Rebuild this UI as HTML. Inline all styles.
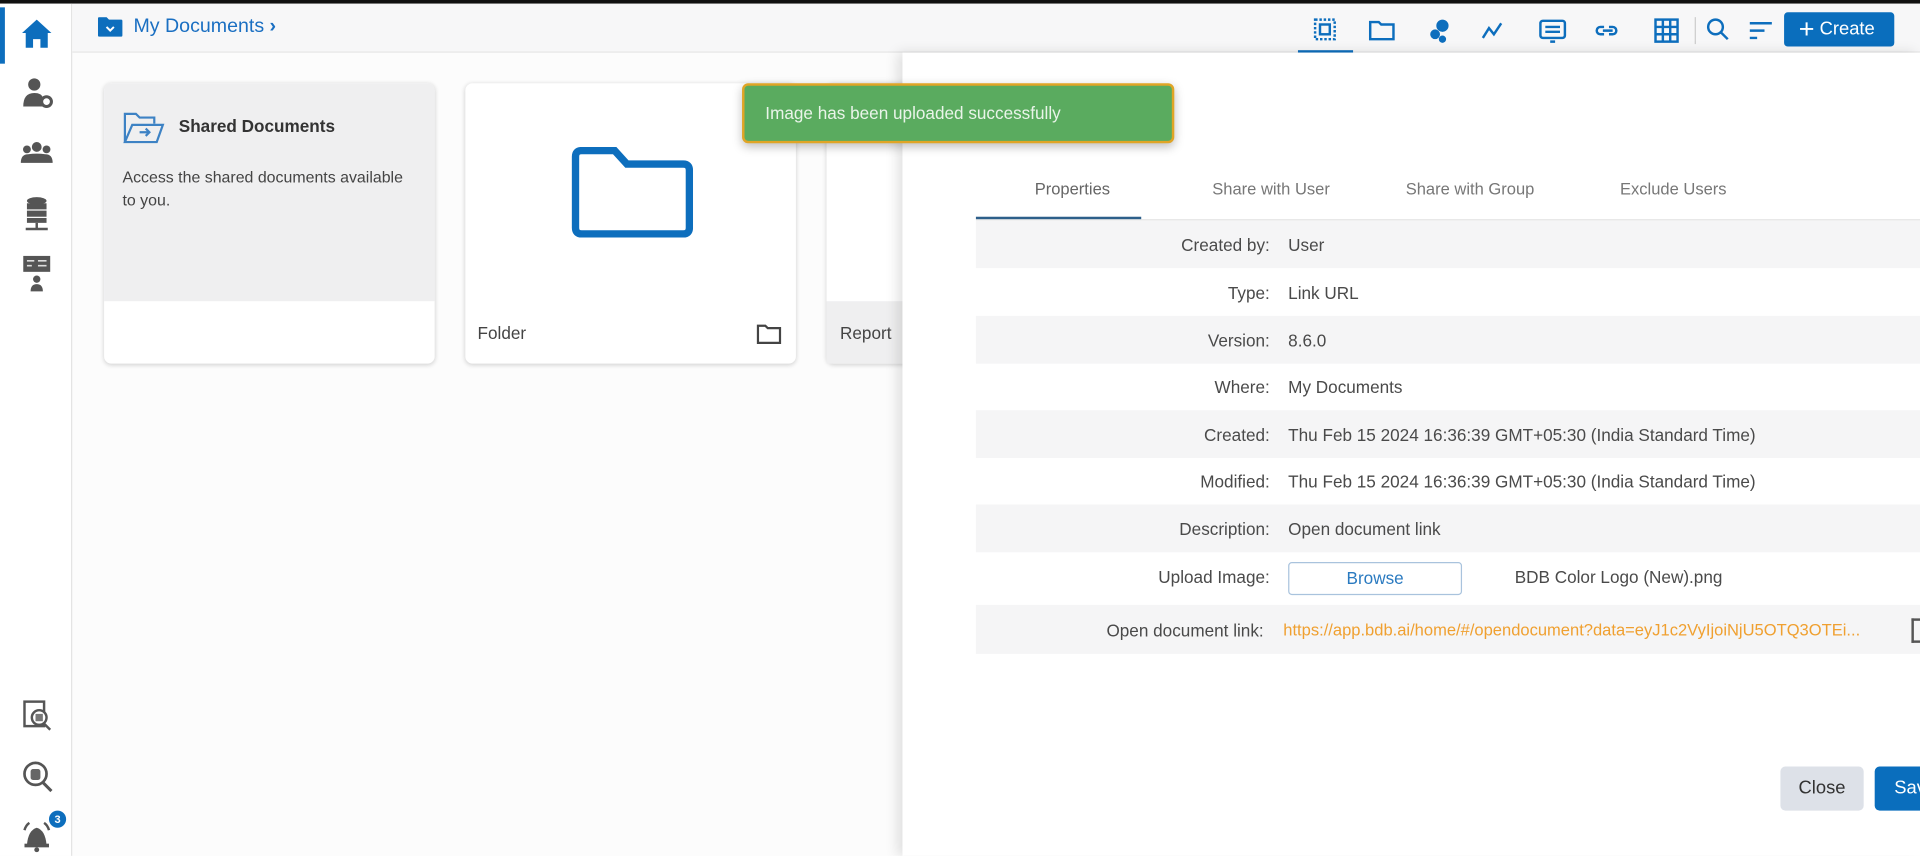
<!DOCTYPE html>
<html><head><meta charset="utf-8"><style>
*{box-sizing:border-box;margin:0;padding:0}
html,body{width:1920px;height:856px;overflow:hidden;background:#fff;font-family:"Liberation Sans",sans-serif}
#w{position:absolute;left:0;top:0;width:1568px;height:699px;transform:scale(1.22449);transform-origin:0 0;background:#fcfcfc;overflow:hidden}
.a{position:absolute}
.t{position:absolute;font-size:14px;color:#444;white-space:nowrap}
.row{position:absolute;left:797px;width:771px;height:39px}
.g{background:#f5f5f6}
.lb{position:absolute;right:531px;top:12px;font-size:14px;color:#4a4a4a}
.vl{position:absolute;left:255px;top:12px;font-size:14px;color:#4a4a4a;white-space:nowrap}
</style></head><body><div id="w">
<div class="a" style="left:0;top:0;width:1568px;height:3px;background:#111"></div>
<div class="a" style="left:0;top:3px;width:59px;height:696px;background:#fff;border-right:1px solid #e3e3e3"></div>
<div class="a" style="left:0;top:6px;width:4px;height:46px;background:#0d6ebd"></div>
<svg class="a" style="left:16px;top:13px" width="28" height="28" viewBox="0 0 28 28"><path d="M14 3 L26 14 L23 14 L23 26 L17 26 L17 19 L11 19 L11 26 L5 26 L5 14 L2 14 Z" fill="#0d6ebd"/></svg>
<svg class="a" style="left:16px;top:62px" width="28" height="28" viewBox="0 0 28 28"><circle cx="12" cy="7" r="5" fill="#555"/><path d="M3 25 Q3 14 12 14 Q18 14 19 18 L19 25Z" fill="#555"/><circle cx="22" cy="21" r="4" fill="none" stroke="#555" stroke-width="2.5"/></svg>
<svg class="a" style="left:15px;top:114px" width="30" height="24" viewBox="0 0 30 24"><circle cx="15" cy="6" r="4" fill="#555"/><circle cx="7" cy="8" r="3.2" fill="#555"/><circle cx="23" cy="8" r="3.2" fill="#555"/><path d="M2 19 Q2 12 8 12 Q15 11 22 12 Q28 12 28 19Z" fill="#555"/></svg>
<svg class="a" style="left:18px;top:160px" width="24" height="30" viewBox="0 0 24 30"><ellipse cx="12" cy="4" rx="8" ry="3" fill="#555"/><rect x="4" y="6" width="16" height="5" fill="#555"/><rect x="4" y="12" width="16" height="5" fill="#555"/><rect x="4" y="18" width="16" height="4" fill="#555"/><path d="M12 22 V26 M3 27 H21" stroke="#555" stroke-width="2"/></svg>
<svg class="a" style="left:18px;top:208px" width="24" height="32" viewBox="0 0 24 32"><rect x="1" y="1" width="22" height="13" fill="#555"/><path d="M4 5h6M4 9h4M13 5h7M13 9h7" stroke="#ddd" stroke-width="1.3"/><circle cx="12" cy="20" r="3" fill="#555"/><path d="M7 30 Q7 24 12 24 Q17 24 17 30Z" fill="#555"/></svg>
<svg class="a" style="left:18px;top:571px" width="26" height="28" viewBox="0 0 26 28"><rect x="2" y="2" width="16" height="20" fill="none" stroke="#555" stroke-width="2"/><circle cx="14" cy="15" r="6" fill="#fff" stroke="#555" stroke-width="2"/><path d="M18 20 L23 25" stroke="#555" stroke-width="2"/><rect x="11" y="12" width="6" height="6" fill="#777"/></svg>
<svg class="a" style="left:18px;top:620px" width="26" height="28" viewBox="0 0 26 28"><circle cx="11" cy="12" r="9" fill="none" stroke="#555" stroke-width="2.2"/><path d="M17 19 L24 26" stroke="#555" stroke-width="2.5"/><rect x="7" y="8" width="8" height="9" rx="2" fill="#666"/></svg>
<svg class="a" style="left:16px;top:668px" width="28" height="28" viewBox="0 0 28 28"><path d="M6 22 Q7 10 14 8 Q21 10 22 22Z" fill="#555"/><rect x="4" y="21" width="20" height="3" fill="#555"/><circle cx="14" cy="26" r="2" fill="#555"/><path d="M4 10 Q5 6 8 4 M24 10 Q23 6 20 4" stroke="#555" stroke-width="2" fill="none"/></svg>
<div class="a" style="left:40px;top:662px;width:14px;height:14px;border-radius:50%;background:#0d6ebd;color:#fff;font-size:9px;font-weight:bold;text-align:center;line-height:14px">3</div>
<div class="a" style="left:59px;top:3px;width:1509px;height:40px;background:#f7f7f8;border-bottom:1px solid #e6e6e6"></div>
<svg class="a" style="left:80px;top:14px" width="20" height="16" viewBox="0 0 20 16"><path d="M0 1 Q0 0 1 0 L7 0 L9 2 L19 2 Q20 2 20 3 L20 15 Q20 16 19 16 L1 16 Q0 16 0 15Z" fill="#0d6ebd"/><path d="M7 8 L10 11 L13 8" stroke="#fff" stroke-width="1.6" fill="none"/></svg>
<div class="t" style="left:109px;top:13px;font-size:16px;color:#1a6fc2">My Documents <span style="font-weight:bold">›</span></div>
<svg class="a" style="left:1072px;top:14px" width="300" height="22" viewBox="0 0 300 22" fill="none" stroke="#0d6ebd" stroke-width="2">
<rect x="2" y="2" width="16" height="16" stroke-dasharray="2 1.5"/><rect x="6" y="6" width="8" height="8"/>
<path d="M47 4 h7 l2 2 h10 v12 h-19z"/>
<circle cx="100" cy="14" r="3" fill="#0d6ebd"/><circle cx="106" cy="7" r="4" fill="#0d6ebd"/><circle cx="106" cy="18" r="2" fill="#0d6ebd"/>
<path d="M139 17 L144 9 L148 14 L154 5"/>
<rect x="186" y="3" width="20" height="14" rx="2"/><path d="M190 8h12M190 12h12M194 20h4"/>
<path d="M238 8 h-3 a3 3 0 0 0 0 6 h3 M242 8 h3 a3 3 0 0 1 0 6 h-3 M237 11 h8"/>
<rect x="280" y="2" width="18" height="18"/><path d="M286 2v18M292 2v18M280 8h18M280 14h18"/>
</svg>
<div class="a" style="left:1384px;top:14px;width:1px;height:22px;background:#ccc"></div>
<svg class="a" style="left:1393px;top:14px" width="56" height="22" viewBox="0 0 56 22" fill="none" stroke="#0d6ebd" stroke-width="2"><circle cx="8" cy="8" r="6"/><path d="M12.5 12.5 L18 18"/><path d="M36 5h18M36 11h12M36 17h6"/></svg>
<div class="a" style="left:1457px;top:10px;width:90px;height:28px;background:#0a6ebd;border-radius:3px;color:#fff;font-size:15px;line-height:28px;padding-left:12px"><span style="font-size:22px;vertical-align:-3px">+</span> Create</div>
<div class="a" style="left:1060px;top:41px;width:45px;height:2px;background:#0d6ebd"></div>
<div class="a" style="left:85px;top:68px;width:270px;height:229px;background:#fff;border-radius:6px;box-shadow:0 1px 4px rgba(0,0,0,.18);overflow:hidden"><div style="height:178px;background:#efeff0"></div></div>
<svg class="a" style="left:100px;top:90px" width="36" height="28" viewBox="0 0 36 28" fill="none" stroke="#3d82c4" stroke-width="1.8"><path d="M2 26 V3 h9 l3 3 h12 v5"/><path d="M2 26 L8 12 H33 L28 26Z"/><path d="M14 18 L22 18 M19 15 L22 18 L19 21"/></svg>
<div class="t" style="left:146px;top:95px;font-size:14px;font-weight:bold;color:#333">Shared Documents</div>
<div class="t" style="left:100px;top:135px;font-size:13px;line-height:19px;color:#444;white-space:normal;width:236px">Access the shared documents available to you.</div>
<div class="a" style="left:380px;top:68px;width:270px;height:229px;background:#fff;border-radius:6px;box-shadow:0 1px 4px rgba(0,0,0,.18)"></div>
<svg class="a" style="left:466px;top:120px" width="100" height="76" viewBox="0 0 100 76"><path d="M4 8 Q4 3 9 3 L36 3 L46 14 L92 14 Q97 14 97 19 L97 66 Q97 71 92 71 L9 71 Q4 71 4 66Z" fill="none" stroke="#0d6ebd" stroke-width="6"/></svg>
<div class="t" style="left:390px;top:264px">Folder</div>
<svg class="a" style="left:617px;top:264px" width="22" height="18" viewBox="0 0 22 18"><path d="M2 2 h6 l2 2 h10 v12 h-18z" fill="none" stroke="#444" stroke-width="1.8"/></svg>
<div class="a" style="left:675px;top:68px;width:80px;height:229px;background:#fff;border-radius:6px;box-shadow:0 1px 4px rgba(0,0,0,.18)"><div style="position:absolute;left:0;top:178px;width:80px;height:51px;background:#efeff0"></div></div>
<div class="t" style="left:686px;top:264px">Report</div>
<div class="a" style="left:737px;top:43px;width:831px;height:656px;background:#fff;box-shadow:-4px 0 10px rgba(0,0,0,.12)"></div>
<div class="t" style="left:831px;top:104px;color:#999;font-size:13px">Mobile URL</div>
<div class="t" style="left:845px;top:147px;color:#666;font-size:13.5px">Properties</div>
<div class="t" style="left:990px;top:147px;color:#777;font-size:13.5px">Share with User</div>
<div class="t" style="left:1148px;top:147px;color:#777;font-size:13.5px">Share with Group</div>
<div class="t" style="left:1323px;top:147px;color:#777;font-size:13.5px">Exclude Users</div>
<div class="a" style="left:797px;top:179px;width:771px;height:1px;background:#e3e3e3"></div>
<div class="a" style="left:797px;top:177px;width:135px;height:2px;background:#2d5f8a"></div>
<div class="row g" style="top:180px"><span class="lb">Created by:</span><span class="vl">User</span></div>
<div class="row" style="top:219px"><span class="lb">Type:</span><span class="vl">Link URL</span></div>
<div class="row g" style="top:258px"><span class="lb">Version:</span><span class="vl">8.6.0</span></div>
<div class="row" style="top:296px"><span class="lb">Where:</span><span class="vl">My Documents</span></div>
<div class="row g" style="top:335px"><span class="lb">Created:</span><span class="vl">Thu Feb 15 2024 16:36:39 GMT+05:30 (India Standard Time)</span></div>
<div class="row" style="top:373px"><span class="lb">Modified:</span><span class="vl">Thu Feb 15 2024 16:36:39 GMT+05:30 (India Standard Time)</span></div>
<div class="row g" style="top:412px"><span class="lb">Description:</span><span class="vl">Open document link</span></div>
<div class="row" style="top:451px;height:43px"><span class="lb">Upload Image:</span><span class="vl" style="left:440px">BDB Color Logo (New).png</span></div>
<div class="a" style="left:1052px;top:459px;width:142px;height:27px;border:1px solid #a9c3dd;border-radius:3px;color:#2a7ac0;font-size:14px;text-align:center;line-height:25px">Browse</div>
<div class="row g" style="top:494px;height:40px"><span class="lb" style="right:536px;top:13px">Open document link:</span><span class="vl" style="left:251px;top:13px;color:#f0a030;font-size:13.5px">https://app.bdb.ai/home/#/opendocument?data=eyJ1c2VyIjoiNjU5OTQ3OTEi...</span></div>
<div class="a" style="left:1561px;top:505px;width:8px;height:20px;border:2px solid #555;border-right:none"></div>
<div class="a" style="left:1454px;top:626px;width:68px;height:36px;background:#dde1e8;border-radius:4px;font-size:15px;color:#333;text-align:center;line-height:36px">Close</div>
<div class="a" style="left:1531px;top:626px;width:60px;height:36px;background:#0a6ebd;border-radius:4px;font-size:15px;color:#fff;line-height:36px;padding-left:16px">Save</div>
<div class="a" style="left:606px;top:68px;width:353px;height:49px;background:#5aab5f;border:2px solid #e0a526;border-radius:5px;box-shadow:0 3px 8px rgba(0,0,0,.25);color:#e9f4e9;font-size:14px;line-height:45px;padding-left:17px">Image has been uploaded successfully</div>
</div></body></html>
